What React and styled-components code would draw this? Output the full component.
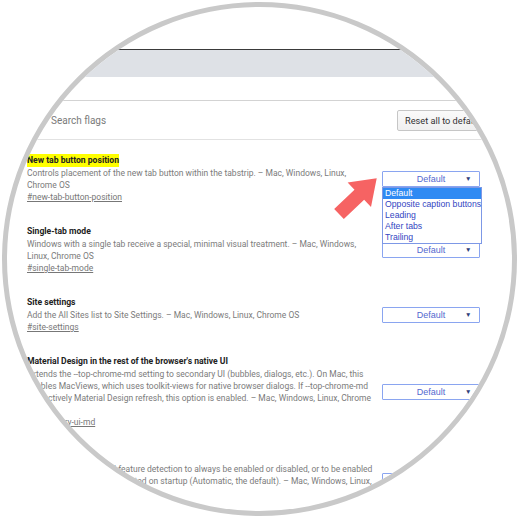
import React from 'react';
import styled, { createGlobalStyle } from 'styled-components';

const Global = createGlobalStyle`
  html, body { margin: 0; padding: 0; background: #fff; }
  body { font-family: Roboto, "Liberation Sans", Arial, sans-serif; }
`;

const Stage = styled.div`
  width: 520px;
  height: 520px;
  box-sizing: border-box;
  padding: 2px 0 0 2px;
  background: #fff;
`;

const Lens = styled.div`
  position: relative;
  width: 515px;
  height: 514px;
  box-sizing: border-box;
  border: 5px solid #c9c9c9;
  border-radius: 50%;
  overflow: hidden;
  background: #fff;
`;

const Page = styled.div`
  display: flex;
  flex-direction: column;
  width: 505px;
`;

const TopSpace = styled.div`
  height: 42px;
  border-bottom: 1px solid #3a3a3a;
`;

const Band = styled.div`
  height: 27px;
  background: #dee1e6;
`;

const Gap = styled.div`
  height: 23px;
  border-bottom: 1px solid #d3d3d3;
`;

const SearchRow = styled.div`
  height: 38px;
  display: flex;
  align-items: center;
  padding-left: 24px;
  border-bottom: 1px solid #e2e2e2;
`;

const SearchBox = styled.div`
  flex: 0 0 366px;
  display: flex;
  align-items: center;
  gap: 8px;
  color: #7a7a7a;
  font-size: 10px;
`;

const ResetButton = styled.div`
  height: 21px;
  box-sizing: border-box;
  padding: 0 7px;
  display: flex;
  align-items: center;
  white-space: nowrap;
  font-size: 9.2px;
  color: #333;
  background: linear-gradient(#fafafa, #f0f0f0);
  border: 1px solid #c6c6c6;
  border-radius: 2px;
`;

const FlagList = styled.div`
  display: flex;
  flex-direction: column;
  gap: 20px;
  padding: 13px 0 0 20px;
`;

const Flag = styled.div`
  display: flex;
  align-items: center;
`;

const FlagText = styled.div`
  flex: 0 0 355px;
  display: flex;
  flex-direction: column;
`;

const Title = styled.div`
  line-height: 14px;
  font-size: 8.6px;
  font-weight: bold;
  color: #222;
  white-space: nowrap;
`;

const Mark = styled.span`
  display: inline-block;
  line-height: 13px;
  background: ${p => (p.$hl ? '#ffff00' : 'transparent')};
`;

const Desc = styled.div`
  font-size: 8.5px;
  line-height: 12px;
  color: #7b7b7b;
  white-space: pre;
`;

const Link = styled.div`
  font-size: 8.5px;
  line-height: 13px;
  color: #777;
  text-decoration: underline;
`;

const SelectWrap = styled.div`
  position: relative;
  width: 98px;
`;

const SelectBox = styled.div`
  height: 16px;
  box-sizing: border-box;
  display: grid;
  grid-template-columns: 14px 1fr 14px;
  align-items: center;
  border: 1px solid #8aa5f0;
  border-radius: 1px;
  background: #fff;
  font-family: "Liberation Sans", Arial, sans-serif;
  font-size: 9px;
  color: #5469cf;
`;

const SelectText = styled.span`
  grid-column: 2;
  text-align: center;
`;

const Caret = styled.span`
  font-size: 6.5px;
  color: #2f3f7a;
  text-align: left;
`;

const Options = styled.div`
  position: absolute;
  top: 100%;
  left: 0;
  width: 100px;
  box-sizing: border-box;
  border: 1px solid #7d98e6;
  background: #fff;
  z-index: 2;
  font-family: "Liberation Sans", Arial, sans-serif;
  font-size: 8.7px;
`;

const Option = styled.div`
  height: 11px;
  line-height: 11px;
  padding: 0 2px;
  white-space: nowrap;
  color: ${p => (p.$active ? '#fff' : '#3346c2')};
  background: ${p => (p.$active ? '#2f8af3' : 'transparent')};
`;

const ArrowSvg = styled.svg`
  position: absolute;
  left: 318px;
  top: 158px;
  z-index: 3;
`;

const Select = ({ open }) => (
  <SelectWrap>
    <SelectBox>
      <SelectText>Default</SelectText>
      <Caret>▼</Caret>
    </SelectBox>
    {open && (
      <Options>
        <Option $active>Default</Option>
        <Option>Opposite caption buttons</Option>
        <Option>Leading</Option>
        <Option>After tabs</Option>
        <Option>Trailing</Option>
      </Options>
    )}
  </SelectWrap>
);

const flags = [
  {
    title: 'New tab button position',
    hl: true,
    desc: 'Controls placement of the new tab button within the tabstrip. – Mac, Windows, Linux,\nChrome OS',
    link: '#new-tab-button-position',
    open: true,
  },
  {
    title: 'Single-tab mode',
    desc: 'Windows with a single tab receive a special, minimal visual treatment. – Mac, Windows,\nLinux, Chrome OS',
    link: '#single-tab-mode',
  },
  {
    title: 'Site settings',
    desc: 'Add the All Sites list to Site Settings. – Mac, Windows, Linux, Chrome OS',
    link: '#site-settings',
  },
  {
    title: "Material Design in the rest of the browser's native UI",
    desc: 'Extends the --top-chrome-md setting to secondary UI (bubbles, dialogs, etc.). On Mac, this\nenables MacViews, which uses toolkit-views for native browser dialogs. If --top-chrome-md\nrespectively Material Design refresh, this option is enabled. – Mac, Windows, Linux, Chrome\nOS',
    link: '#secondary-ui-md',
  },
  {
    title: 'Touch Events API',
    desc: 'Force Touch Events API feature detection to always be enabled or disabled, or to be enabled\nwhen a touchscreen is detected on startup (Automatic, the default). – Mac, Windows, Linux,\nChrome OS, Android',
    link: '#touch-events',
  },
];

export default function App() {
  return (
    <>
      <Global />
      <Stage>
        <Lens>
          <Page>
            <TopSpace />
            <Band />
            <Gap />
            <SearchRow>
              <SearchBox>
                <svg width="12" height="12" viewBox="0 0 24 24" fill="none" stroke="#777" strokeWidth="2.4">
                  <circle cx="10" cy="10" r="6.5" />
                  <path d="M15 15l6 6" />
                </svg>
                Search flags
              </SearchBox>
              <ResetButton>Reset all to defaults</ResetButton>
            </SearchRow>
            <FlagList>
              {flags.map(f => (
                <Flag key={f.link}>
                  <FlagText>
                    <Title>
                      <Mark $hl={f.hl}>{f.title}</Mark>
                    </Title>
                    <Desc>{f.desc}</Desc>
                    <Link>{f.link}</Link>
                  </FlagText>
                  <Select open={f.open} />
                </Flag>
              ))}
            </FlagList>
          </Page>
          <ArrowSvg width="70" height="70" viewBox="0 0 70 70">
            <polygon
              points="0,-7 28,-7 28,-17 52,0 28,17 28,7 0,7"
              fill="#f66363"
              transform="translate(14 49) rotate(-43.5)"
            />
          </ArrowSvg>
        </Lens>
      </Stage>
    </>
  );
}
